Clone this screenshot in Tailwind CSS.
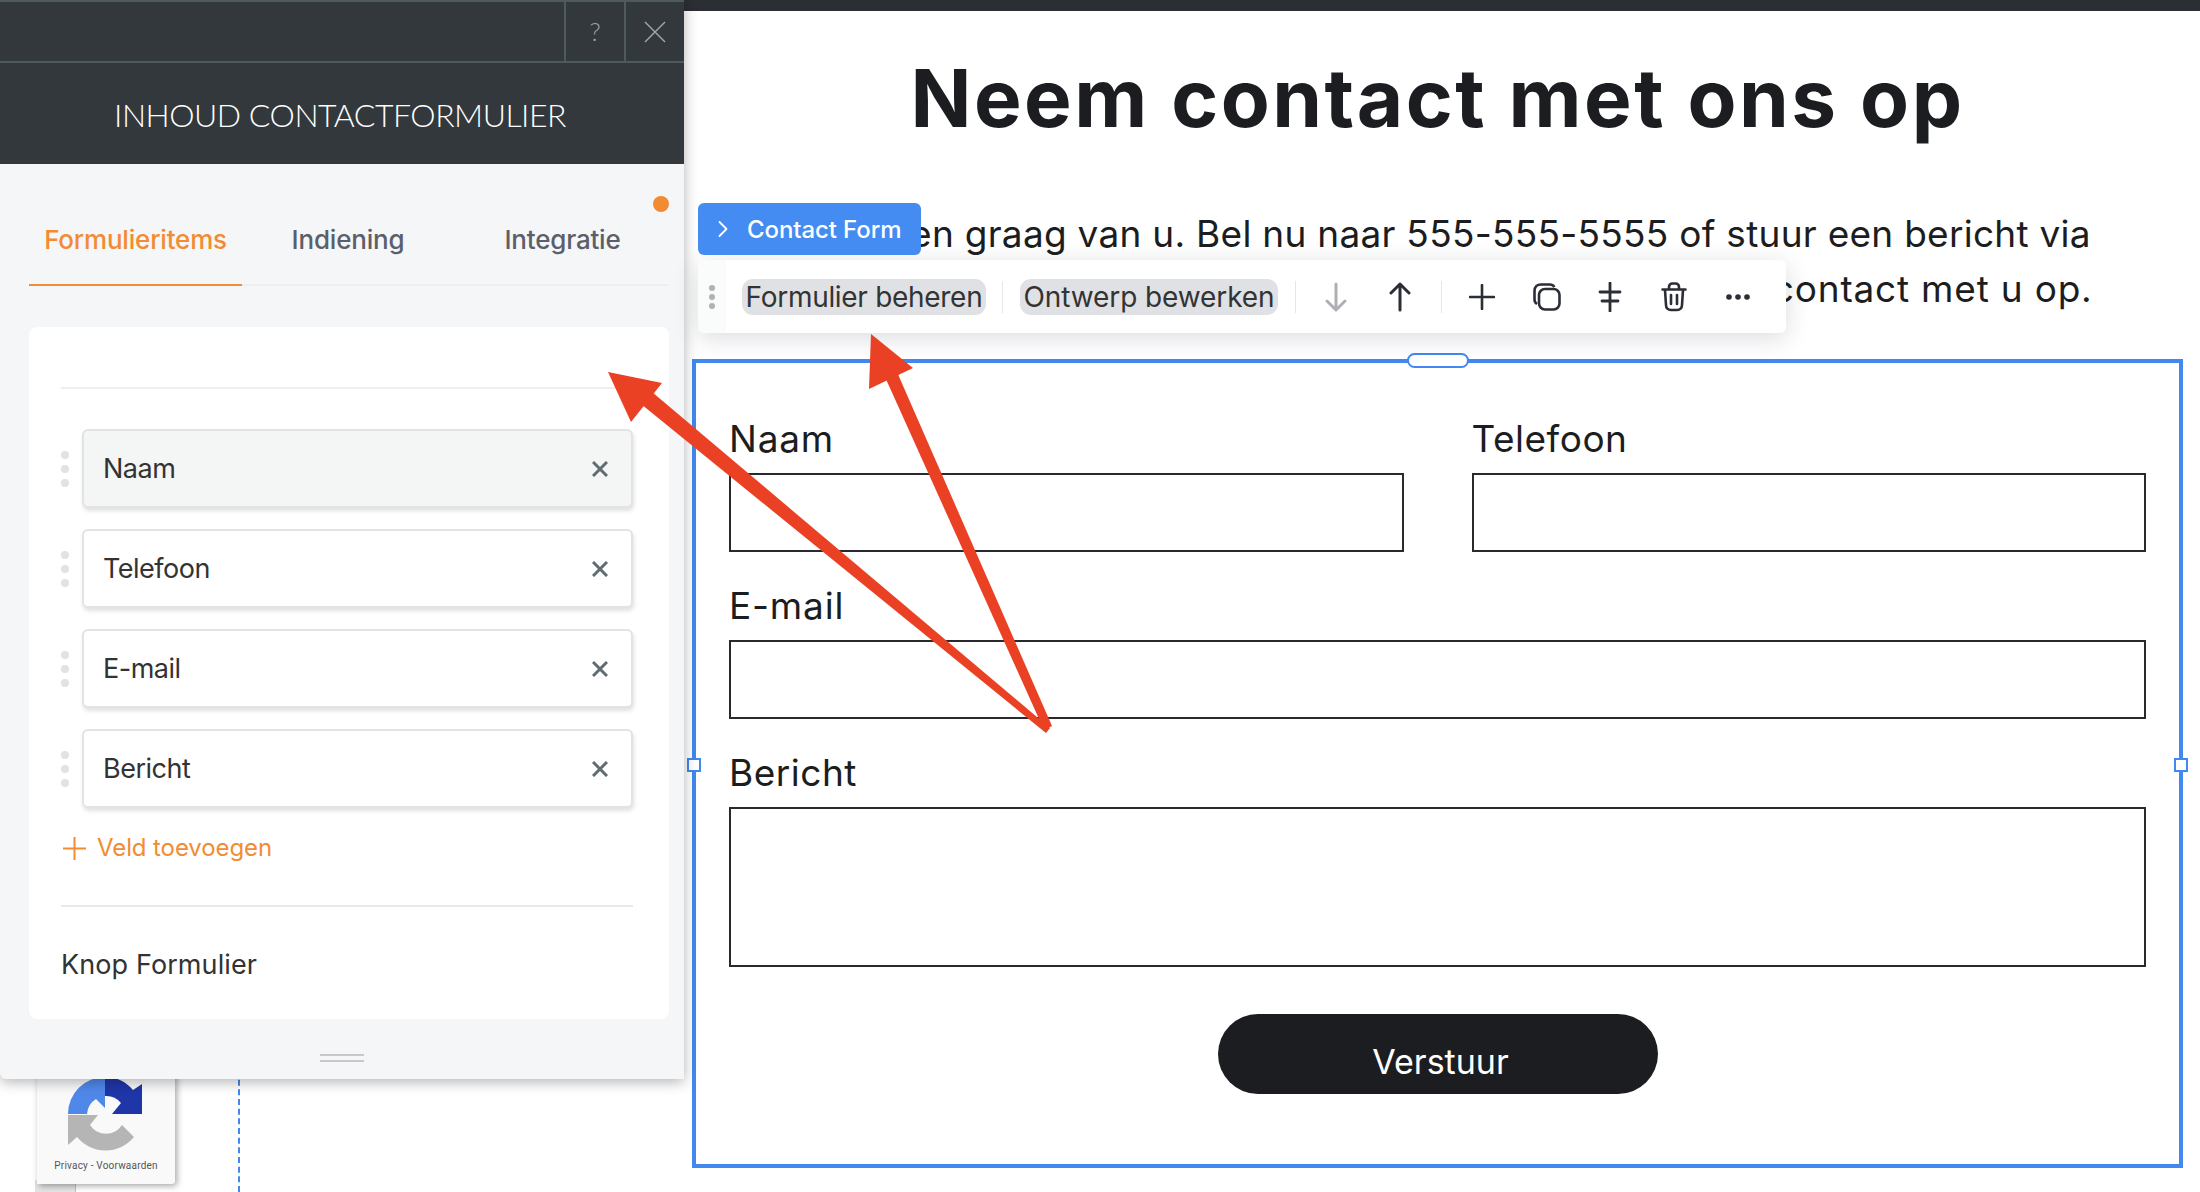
<!DOCTYPE html>
<html lang="nl">
<head>
<meta charset="UTF-8">
<title>Inhoud contactformulier</title>
<script src="https://cdn.jsdelivr.net/npm/@tailwindcss/browser@4"></script>
</head>
<body class="bg-white font-['Inter',sans-serif] text-[#1c1d20]">
<div class="relative w-[2200px] h-[1192px] overflow-hidden">

  <!-- page content -->
  <div class="h-[11px] bg-[#2b2e33]"></div>
  <main class="ml-[692px] w-[1491px] flex flex-col items-center">
    <h1 class="mt-[29px] h-[116px] text-[80px] leading-[116px] font-bold tracking-[2.5px] whitespace-nowrap">Neem contact met ons op</h1>
    <p class="mt-[50px] w-[1306px] text-[37px] leading-[55px] text-center tracking-[0.27px] whitespace-nowrap">We horen graag van u. Bel nu naar 555-555-5555 of stuur een bericht via<br><span class="tracking-[0.8px]">het formulier hieronder en wij nemen zo snel mogelijk contact met u op.</span></p>

    <!-- selected form -->
    <section class="relative mt-[43px] w-full h-[809px] border-4 border-[#4288ee] px-[33px] pt-[54px]">
      <span class="absolute left-[711px] -top-[10px] w-[62px] h-[15px] rounded-full bg-white border-2 border-[#4288ee]"></span>
      <span class="absolute -left-[9px] top-[395px] w-[14px] h-[14px] bg-white border-2 border-[#4288ee]"></span>
      <span class="absolute -right-[9px] top-[395px] w-[14px] h-[14px] bg-white border-2 border-[#4288ee]"></span>
      <div class="grid grid-cols-2 gap-x-[68px] text-[37px] leading-[44px]">
        <div>
          <label class="block h-[56px] tracking-[0.8px]">Naam</label>
          <div class="h-[79px] border-2 border-[#2a2a2e]"></div>
        </div>
        <div>
          <label class="block h-[56px] tracking-[0.5px]">Telefoon</label>
          <div class="h-[79px] border-2 border-[#2a2a2e]"></div>
        </div>
        <div class="col-span-2 mt-[32px]">
          <label class="block h-[56px] tracking-[0.8px]">E-mail</label>
          <div class="h-[79px] border-2 border-[#2a2a2e]"></div>
        </div>
        <div class="col-span-2 mt-[32px]">
          <label class="block h-[56px] tracking-[0.5px]">Bericht</label>
          <div class="h-[160px] border-2 border-[#2a2a2e]"></div>
        </div>
      </div>
      <div class="flex justify-center mt-[47px]">
        <button class="w-[440px] h-[80px] rounded-full bg-[#1c1d20] text-white text-[34px] pt-[14px] pl-[6px]">Verstuur</button>
      </div>
    </section>
  </main>

  <!-- dashed guide and recaptcha badge -->
  <div class="absolute left-[238px] top-[1070px] h-[122px] border-l-2 border-dashed border-[#4288ee]"></div>
  <div class="absolute left-[35px] top-[1180px] w-[41px] h-[12px] bg-[#e4e4e4] border-r border-[#a9c6f5]"></div>
  <div class="absolute left-[37px] top-[1060px] w-[138px] h-[124px] bg-[#f9f9f9] rounded-br-[3px] shadow-[2px_2px_6px_rgba(0,0,0,0.35)] flex flex-col items-center">
    <svg class="mt-[17px] ml-[-3px]" width="74" height="78" viewBox="68 1077 74 78">
      <path fill="#b5b5b5" d="M68 1115H98L90 1125A19 19 0 0 0 122 1125L134 1137A37 37 0 0 1 77 1137L68 1145Z"/>
      <path fill="#5088ea" d="M68 1114A37 37 0 0 1 105 1077V1108L96 1099A19 19 0 0 0 87 1114Z"/>
      <path fill="#1f36a8" d="M105 1077A37 37 0 0 1 133 1090L142 1084V1114H112L121 1103A19 19 0 0 0 105 1096Z"/>
    </svg>
    <span class="mt-[5px] text-[10px] leading-[12px] text-[#555] font-['Roboto',sans-serif] whitespace-nowrap tracking-[0.2px]">Privacy - Voorwaarden</span>
  </div>

  <!-- settings panel -->
  <aside class="absolute left-0 top-0 w-[684px] h-[1079px] bg-[#f5f6f8] rounded-bl-[6px] shadow-[0_3px_14px_rgba(0,0,0,0.3)]">
    <div class="bg-[#33383c] h-[164px] border-t-2 border-[#4f5a5c]">
      <div class="flex justify-end h-[61px] border-b-2 border-[#4f5a5c]">
        <div class="w-[60px] border-l-2 border-[#4f5a5c] flex items-center justify-center text-[#9aa0a3] text-[26px] font-['Lato',sans-serif] font-light">?</div>
        <div class="w-[60px] border-l-2 border-[#4f5a5c] flex items-center justify-center">
          <svg width="22" height="22" viewBox="0 0 22 22" fill="none" stroke="#a4a9ac" stroke-width="1.4"><path d="M1 1L21 21M21 1L1 21"/></svg>
        </div>
      </div>
      <h2 class="text-center text-white text-[32px] leading-[40px] mt-[32px] font-light font-['Lato',sans-serif] tracking-[-0.5px] pr-[4px]">INHOUD CONTACTFORMULIER</h2>
    </div>

    <div class="relative">
      <span class="absolute left-[653px] top-[32px] w-[16px] h-[16px] rounded-full bg-[#f28c33]"></span>
      <div class="ml-[29px] w-[640px] h-[122px] border-b-2 border-[#efefef] flex text-[26px] font-medium tracking-[-0.2px] text-[#5c5f69]">
        <div class="w-[213px] h-[122px] border-b-2 border-[#f28c33] text-[#f28c33] text-center pt-[58px] leading-[36px]">Formulieritems</div>
        <div class="w-[212px] text-center pt-[58px] leading-[36px]">Indiening</div>
        <div class="w-[215px] text-center pt-[58px] leading-[36px] pl-[2px]">Integratie</div>
      </div>

      <div class="mt-[41px] ml-[29px] w-[640px] h-[692px] bg-white rounded-[8px] pl-[32px] pr-[36px] pt-[60px]">
        <div class="border-t-2 border-[#efefef]"></div>
        <div class="mt-[40px] flex flex-col gap-[21px]">
          <div class="flex items-center">
            <div class="w-[21px] flex flex-col gap-[6px]"><span class="w-[8px] h-[8px] rounded-full bg-[#e2e2e2]"></span><span class="w-[8px] h-[8px] rounded-full bg-[#e2e2e2]"></span><span class="w-[8px] h-[8px] rounded-full bg-[#e2e2e2]"></span></div>
            <div class="w-[551px] h-[79px] bg-[#f4f5f5] border-2 border-[#e3e3e3] rounded-[6px] shadow-[1px_3px_4px_rgba(0,0,0,0.12)] flex items-center justify-between pl-[19px] pr-[23px] text-[27px] tracking-[-0.5px] text-[#333]">
              <span class="pt-[2px]">Naam</span>
              <svg width="16" height="16" viewBox="0 0 16 16" stroke="#5f6d73" stroke-width="3"><path d="M1 1L15 15M15 1L1 15"/></svg>
            </div>
          </div>
          <div class="flex items-center">
            <div class="w-[21px] flex flex-col gap-[6px]"><span class="w-[8px] h-[8px] rounded-full bg-[#e2e2e2]"></span><span class="w-[8px] h-[8px] rounded-full bg-[#e2e2e2]"></span><span class="w-[8px] h-[8px] rounded-full bg-[#e2e2e2]"></span></div>
            <div class="w-[551px] h-[79px] bg-white border-2 border-[#e3e3e3] rounded-[6px] shadow-[1px_3px_4px_rgba(0,0,0,0.12)] flex items-center justify-between pl-[19px] pr-[23px] text-[27px] tracking-[-0.5px] text-[#333]">
              <span class="pt-[2px]">Telefoon</span>
              <svg width="16" height="16" viewBox="0 0 16 16" stroke="#5f6d73" stroke-width="3"><path d="M1 1L15 15M15 1L1 15"/></svg>
            </div>
          </div>
          <div class="flex items-center">
            <div class="w-[21px] flex flex-col gap-[6px]"><span class="w-[8px] h-[8px] rounded-full bg-[#e2e2e2]"></span><span class="w-[8px] h-[8px] rounded-full bg-[#e2e2e2]"></span><span class="w-[8px] h-[8px] rounded-full bg-[#e2e2e2]"></span></div>
            <div class="w-[551px] h-[79px] bg-white border-2 border-[#e3e3e3] rounded-[6px] shadow-[1px_3px_4px_rgba(0,0,0,0.12)] flex items-center justify-between pl-[19px] pr-[23px] text-[27px] tracking-[-0.5px] text-[#333]">
              <span class="pt-[2px]">E-mail</span>
              <svg width="16" height="16" viewBox="0 0 16 16" stroke="#5f6d73" stroke-width="3"><path d="M1 1L15 15M15 1L1 15"/></svg>
            </div>
          </div>
          <div class="flex items-center">
            <div class="w-[21px] flex flex-col gap-[6px]"><span class="w-[8px] h-[8px] rounded-full bg-[#e2e2e2]"></span><span class="w-[8px] h-[8px] rounded-full bg-[#e2e2e2]"></span><span class="w-[8px] h-[8px] rounded-full bg-[#e2e2e2]"></span></div>
            <div class="w-[551px] h-[79px] bg-white border-2 border-[#e3e3e3] rounded-[6px] shadow-[1px_3px_4px_rgba(0,0,0,0.12)] flex items-center justify-between pl-[19px] pr-[23px] text-[27px] tracking-[-0.5px] text-[#333]">
              <span class="pt-[2px]">Bericht</span>
              <svg width="16" height="16" viewBox="0 0 16 16" stroke="#5f6d73" stroke-width="3"><path d="M1 1L15 15M15 1L1 15"/></svg>
            </div>
          </div>
        </div>
        <div class="mt-[25px] flex items-center gap-[11px] text-[#f28c33] text-[24px] tracking-[-0.1px] leading-[30px]">
          <svg class="ml-[2px]" width="23" height="23" viewBox="0 0 23 23" stroke="#f28c33" stroke-width="2"><path d="M11.5 0V23M0 11.5H23"/></svg>
          <span>Veld toevoegen</span>
        </div>
        <div class="mt-[42px] border-t-2 border-[#e9e9e9]"></div>
        <div class="mt-[40px] text-[27px] leading-[36px] tracking-[0.1px] text-[#333]">Knop Formulier</div>
      </div>

      <div class="mt-[35px] ml-[320px] w-[44px] h-[8px] border-y-2 border-[#c8c8c8]"></div>
    </div>
  </aside>

  <!-- element tag and toolbar -->
  <div class="absolute left-[698px] top-[260px] w-[1088px] h-[73px] bg-white rounded-[6px] shadow-[0_5px_24px_rgba(30,40,60,0.16)] flex items-center">
    <div class="w-[28px] h-full bg-[#fafbfb] rounded-l-[6px] flex flex-col items-center justify-center gap-[3px]">
      <span class="w-[6px] h-[6px] rounded-full bg-[#aeb2b5]"></span><span class="w-[6px] h-[6px] rounded-full bg-[#aeb2b5]"></span><span class="w-[6px] h-[6px] rounded-full bg-[#aeb2b5]"></span>
    </div>
    <div class="ml-[16px] w-[244px] h-[36px] rounded-[11px] bg-[#dfe1e4] flex items-center justify-center text-[28px] tracking-[-0.3px] text-[#333] whitespace-nowrap">Formulier beheren</div>
    <span class="ml-[16px] w-[1px] h-[32px] bg-[#e6e6e6]"></span>
    <div class="ml-[17px] w-[258px] h-[36px] rounded-[11px] bg-[#dfe1e4] flex items-center justify-center text-[28px] tracking-[-0.1px] text-[#333] whitespace-nowrap">Ontwerp bewerken</div>
    <span class="ml-[17px] w-[1px] h-[32px] bg-[#e6e6e6]"></span>
    <svg class="ml-[25px]" width="30" height="30" viewBox="0 0 30 30" fill="none" stroke="#aeb0b3" stroke-width="3" stroke-linecap="round" stroke-linejoin="round"><path d="M15 2V28M6 19L15 28L24 19"/></svg>
    <svg class="ml-[34px]" width="30" height="30" viewBox="0 0 30 30" fill="none" stroke="#2b2e36" stroke-width="3" stroke-linecap="round" stroke-linejoin="round"><path d="M15 28V2M6 11L15 2L24 11"/></svg>
    <span class="ml-[26px] w-[1px] h-[32px] bg-[#e6e6e6]"></span>
    <svg class="ml-[27px]" width="26" height="26" viewBox="0 0 26 26" fill="none" stroke="#2b2e36" stroke-width="2.6" stroke-linecap="round"><path d="M13 1V25M1 13H25"/></svg>
    <svg class="ml-[38px]" width="28" height="28" viewBox="0 0 28 28" fill="none" stroke="#2b2e36" stroke-width="2.6" stroke-linejoin="round"><path d="M4 21C2.5 20 1.5 18.5 1.5 16.5V8C1.5 4 4 1.5 8 1.5H17C19 1.5 20.5 2.5 21.5 4"/><rect x="6" y="6" width="20.5" height="20.5" rx="6"/></svg>
    <svg class="ml-[36px]" width="26" height="30" viewBox="0 0 26 30" fill="none" stroke="#2b2e36" stroke-width="2.8" stroke-linecap="round"><path d="M13 1V29M3 10H23M5 19H21"/></svg>
    <svg class="ml-[38px]" width="26" height="30" viewBox="0 0 26 30" fill="none" stroke="#2b2e36" stroke-width="2.6" stroke-linecap="round" stroke-linejoin="round"><path d="M1.5 7.5H24.5M8 7V5C8 3 9.5 1.5 11.5 1.5H14.5C16.5 1.5 18 3 18 5V7M4 8L5 23C5 26 7 28 10 28H16C19 28 21 26 21 23L22 8M10 13V22M16 13V22"/></svg>
    <svg class="ml-[38px]" width="26" height="8" viewBox="0 0 26 8" fill="#2b2e36"><circle cx="4" cy="4" r="2.8"/><circle cx="13" cy="4" r="2.8"/><circle cx="22" cy="4" r="2.8"/></svg>
  </div>
  <div class="absolute left-[698px] top-[203px] w-[223px] h-[52px] bg-[#448cf2] rounded-[6px] flex items-center pl-[20px] text-white text-[24px] font-medium tracking-[-0.1px] whitespace-nowrap">
    <svg width="10" height="18" viewBox="0 0 10 18" fill="none" stroke="#fff" stroke-width="1.8" stroke-linecap="round" stroke-linejoin="round"><path d="M1.5 2L8.5 9L1.5 16"/></svg>
    <span class="ml-[19px] pt-[2px]">Contact Form</span>
  </div>

  <!-- red annotation arrows -->
  <svg class="absolute left-0 top-0 pointer-events-none" width="2200" height="1192" viewBox="0 0 2200 1192">
    <g fill="#ea4125">
      <path d="M1050 728L1046 733L641 404L652 392Z"/>
      <path d="M1052 726L1044 730L885 377L897 372Z"/>
      <path d="M608 372L662 383L631 422Z"/>
      <path d="M871 334L913 368L869 389Z"/>
    </g>
  </svg>
</div>
</body>
</html>
